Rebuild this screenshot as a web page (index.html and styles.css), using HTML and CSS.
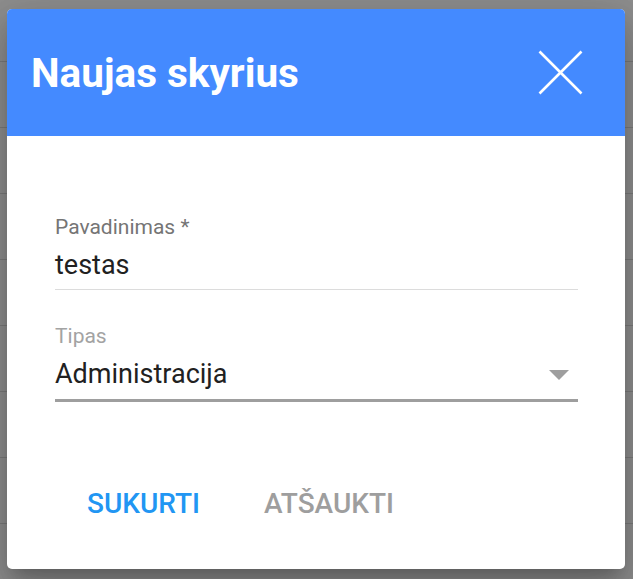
FILE: index.html
```html
<!DOCTYPE html>
<html lang="lt">
<head>
<meta charset="utf-8">
<title>Naujas skyrius</title>
<link rel="stylesheet" href="styles.css">
</head>
<body>
<div class="backdrop">
  <div class="bg-row"></div>
  <div class="bg-row"></div>
  <div class="bg-row"></div>
  <div class="bg-row"></div>
  <div class="bg-row"></div>
  <div class="bg-row"></div>
  <div class="bg-row"></div>
  <div class="bg-row"></div>
  <div class="bg-row"></div>
</div>
<div class="dialog">
  <div class="dialog-header">
    <h1 class="dialog-title">Naujas skyrius</h1>
    <button class="close-btn" aria-label="Uždaryti">
      <svg width="45" height="45" viewBox="0 0 45 45" aria-hidden="true">
        <path d="M1.5 1.5 L43.5 43.5 M43.5 1.5 L1.5 43.5" stroke="#fff" stroke-width="2.6" fill="none"/>
      </svg>
    </button>
  </div>
  <div class="dialog-body">
    <div class="field field-text">
      <div class="field-label">Pavadinimas *</div>
      <div class="field-value">testas</div>
    </div>
    <div class="field field-select">
      <div class="field-label field-label-light">Tipas</div>
      <div class="select-row">
        <div class="field-value">Administracija</div>
        <svg class="caret" width="20" height="10" viewBox="0 0 20 10" aria-hidden="true">
          <path d="M0 0 L20 0 L10 10 Z" fill="#9e9e9e"/>
        </svg>
      </div>
    </div>
  </div>
  <div class="dialog-actions">
    <button class="btn btn-primary">SUKURTI</button>
    <button class="btn btn-secondary">ATŠAUKTI</button>
  </div>
</div>
</body>
</html>
```

FILE: styles.css
```css
* {
  box-sizing: border-box;
}

html, body {
  margin: 0;
  padding: 0;
}

body {
  width: 633px;
  height: 579px;
  overflow: hidden;
  background: #8e8e8e;
  font-family: Roboto, "Liberation Sans", sans-serif;
  position: relative;
}

.backdrop {
  display: flex;
  flex-direction: column;
}

.bg-row {
  height: 66px;
  border-bottom: 1px solid #7b7b7b;
  flex: none;
}

.bg-row:first-child {
  height: 62px;
}

.dialog {
  position: absolute;
  left: 7px;
  top: 9px;
  width: 618px;
  background: #fff;
  border-radius: 5px;
  overflow: hidden;
  box-shadow: 0 11px 15px -7px rgba(0,0,0,0.2), 0 24px 38px 3px rgba(0,0,0,0.14), 0 9px 46px 8px rgba(0,0,0,0.12);
}

.dialog-header {
  height: 127px;
  background: #448aff;
  display: flex;
  align-items: center;
  justify-content: space-between;
  padding: 0 42px 0 24px;
}

.dialog-title {
  margin: 0;
  color: #fff;
  font-size: 40.5px;
  font-weight: 700;
  line-height: 46px;
}

.close-btn {
  background: none;
  border: 0;
  padding: 0;
  width: 45px;
  height: 45px;
  display: block;
}

.close-btn svg {
  display: block;
}

.dialog-body {
  padding: 79px 47px 0 48px;
  display: flex;
  flex-direction: column;
  gap: 34px;
}

.field-label {
  font-size: 21px;
  line-height: 24px;
  color: #757575;
  margin-bottom: 10px;
}

.field-label-light {
  color: #a3a3a3;
}

.field-value {
  font-size: 27px;
  line-height: 32px;
  color: #212121;
}

.field-text {
  padding-bottom: 8px;
  border-bottom: 1px solid #dcdcdc;
}

.field-select {
  padding-bottom: 9px;
  border-bottom: 3px solid #9e9e9e;
}

.select-row {
  display: flex;
  align-items: center;
  justify-content: space-between;
}

.caret {
  display: block;
  margin-right: 9px;
  margin-top: 1px;
}

.dialog-actions {
  display: flex;
  gap: 32px;
  padding: 76px 0 39px 64px;
}

.btn {
  background: none;
  border: 0;
  padding: 8px 16px;
  font-family: Roboto, "Liberation Sans", sans-serif;
  font-size: 28px;
  font-weight: 500;
  line-height: 36px;
}

.btn-primary {
  color: #2196f3;
}

.btn-secondary {
  color: #9e9e9e;
}
```
